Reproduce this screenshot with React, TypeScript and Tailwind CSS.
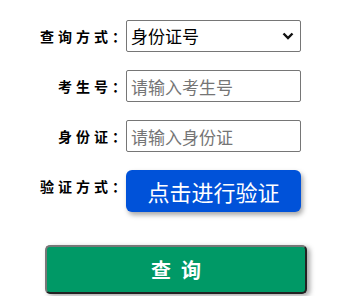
import { useState } from 'react';

const cjk = '"Noto Sans CJK SC", "Liberation Sans", sans-serif';

function Label({ text }: { text: string }) {
  return (
    <div className="h-8 flex items-center justify-end text-[14px] font-bold text-black">
      <span className="tracking-[4px]">{text}</span>
      <span>：</span>
    </div>
  );
}

export default function App() {
  const [mode, setMode] = useState('sfz');

  return (
    <div className="w-[351px] h-[296px] bg-white overflow-hidden" style={{ fontFamily: cjk }}>
      <div className="grid grid-cols-[126px_175px] gap-y-[18px] pt-5">
        <Label text="查询方式" />
        <div className="relative h-8">
          <select
            value={mode}
            onChange={(e) => setMode(e.target.value)}
            className="appearance-none w-full h-8 border border-[#767676] rounded-[2px] pl-1 text-[17px] text-black bg-white outline-none"
          >
            <option value="sfz">身份证号</option>
            <option value="ksh">考生号</option>
          </select>
          <svg
            className="absolute right-[7px] top-[12px] pointer-events-none"
            width="12"
            height="8"
            viewBox="0 0 12 8"
          >
            <path d="M1.5 1.5 L6 6 L10.5 1.5" fill="none" stroke="#111" strokeWidth="2.4" />
          </svg>
        </div>

        <Label text="考生号" />
        <input
          placeholder="请输入考生号"
          className="w-full h-8 border border-[#767676] rounded-[2px] pl-1 text-[17px] text-black placeholder:text-[#757575] outline-none"
        />

        <Label text="身份证" />
        <input
          placeholder="请输入身份证"
          className="w-full h-8 border border-[#767676] rounded-[2px] pl-1 text-[17px] text-black placeholder:text-[#757575] outline-none"
        />

        <Label text="验证方式" />
        <button className="w-full h-[42px] rounded-[6px] bg-[#0052d9] text-white text-[22px] shadow-[2px_3px_5px_rgba(0,0,0,0.35)]">
          点击进行验证
        </button>
      </div>

      <button className="mt-[33px] ml-[45px] w-[262px] h-[49px] flex items-center justify-center gap-[10px] rounded-[5px] border-2 border-t-[#777] border-l-[#777] border-r-[#222] border-b-[#222] bg-[#009966] text-white text-[20px] font-bold shadow-[3px_2px_5px_rgba(0,0,0,0.35)]">
        <span>查</span>
        <span>询</span>
      </button>
    </div>
  );
}
